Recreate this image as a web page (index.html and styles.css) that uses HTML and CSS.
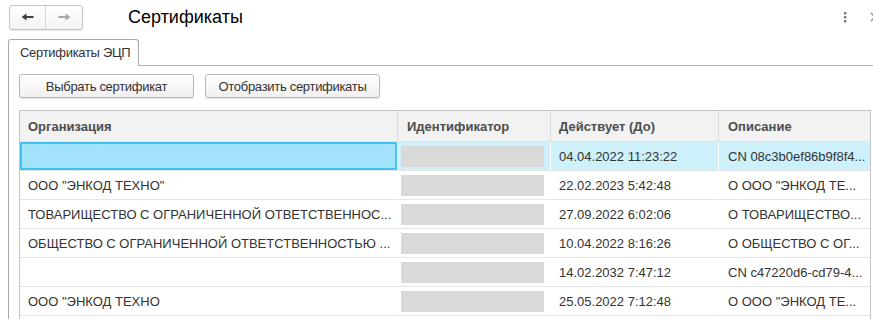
FILE: index.html
```html
<!DOCTYPE html>
<html lang="ru">
  <head>
    <meta charset="UTF-8" />
    <title>Сертификаты</title>
    <link rel="stylesheet" href="styles.css">
  </head>
  <body>
    <div class="toolbar">
      <div class="nav">
        <button class="nav-btn back">
          <svg width="13" height="8" viewBox="0 0 13 8"><path d="M0.5 4 L5.5 0.5 V3 H12.5 V5 H5.5 V7.5 Z" /></svg>
        </button>
        <button class="nav-btn fwd">
          <svg width="13" height="8" viewBox="0 0 13 8"><path d="M12.5 4 L7.5 0.5 V3 H0.5 V5 H7.5 V7.5 Z" /></svg>
        </button>
      </div>
      <h1 class="title">Сертификаты</h1>
      <div class="actions">
        <svg class="more" width="4" height="12" viewBox="0 0 4 12">
          <rect x="1" y="1" width="2.4" height="2.4" />
          <rect x="1" y="5" width="2.4" height="2.4" />
          <rect x="1" y="9" width="2.4" height="2.4" />
        </svg>
        <svg class="close" width="10" height="10" viewBox="0 0 10 10">
          <path d="M1 1 L9 9 M9 1 L1 9" />
        </svg>
      </div>
    </div>

    <div class="tabs">
      <div class="tab">Сертификаты ЭЦП</div>
      <div class="tab-line"></div>
    </div>

    <div class="panel">
      <div class="buttons">
        <button class="btn">Выбрать сертификат</button>
        <button class="btn">Отобразить сертификаты</button>
      </div>

      <table class="grid">
        <thead>
          <tr>
            <th class="c-org">Организация</th>
            <th class="c-id">Идентификатор</th>
            <th class="c-date">Действует (До)</th>
            <th class="c-desc">Описание</th>
          </tr>
        </thead>
        <tbody>
          <tr class="selected">
            <td class="current"></td>
            <td class="id"><div class="hidden-id"></div></td>
            <td>04.04.2022 11:23:22</td>
            <td>CN 08c3b0ef86b9f8f4...</td>
          </tr>
          <tr>
            <td>ООО "ЭНКОД ТЕХНО"</td>
            <td class="id"><div class="hidden-id"></div></td>
            <td>22.02.2023 5:42:48</td>
            <td>О ООО "ЭНКОД ТЕ...</td>
          </tr>
          <tr>
            <td>ТОВАРИЩЕСТВО С ОГРАНИЧЕННОЙ ОТВЕТСТВЕННОС...</td>
            <td class="id"><div class="hidden-id"></div></td>
            <td>27.09.2022 6:02:06</td>
            <td>О ТОВАРИЩЕСТВО...</td>
          </tr>
          <tr>
            <td>ОБЩЕСТВО С ОГРАНИЧЕННОЙ ОТВЕТСТВЕННОСТЬЮ ...</td>
            <td class="id"><div class="hidden-id"></div></td>
            <td>10.04.2022 8:16:26</td>
            <td>О ОБЩЕСТВО С ОГ...</td>
          </tr>
          <tr>
            <td></td>
            <td class="id"><div class="hidden-id"></div></td>
            <td>14.02.2032 7:47:12</td>
            <td>CN c47220d6-cd79-4...</td>
          </tr>
          <tr>
            <td>ООО "ЭНКОД ТЕХНО</td>
            <td class="id"><div class="hidden-id"></div></td>
            <td>25.05.2022 7:12:48</td>
            <td>О ООО "ЭНКОД ТЕ...</td>
          </tr>
          <tr>
            <td></td>
            <td class="id"><div class="hidden-id"></div></td>
            <td></td>
            <td></td>
          </tr>
        </tbody>
      </table>
    </div>
  </body>
</html>
```

FILE: styles.css
```css
html,
body {
  margin: 0;
  padding: 0;
  height: 320px;
  overflow: hidden;
  background: white;
}
body {
  font-family: "Liberation Sans", Arial, sans-serif;
  font-size: 13px;
  color: #333;
}
.toolbar {
  display: flex;
  align-items: center;
  height: 24px;
  padding: 5px 0 0 9px;
}
.nav {
  display: flex;
  height: 23px;
  border: 1px solid #c2c2c2;
  border-radius: 3px;
  background: linear-gradient(#fff, #f3f3f3);
  box-shadow: 0 1px 1px rgba(0, 0, 0, 0.08);
}
.nav-btn {
  width: 36px;
  height: 23px;
  padding: 0;
  border: none;
  background: none;
  display: flex;
  align-items: center;
  justify-content: center;
}
.nav-btn.back {
  border-right: 1px solid #d6d6d6;
}
.back svg {
  fill: #404040;
}
.fwd svg {
  fill: #a8a8a8;
}
.title {
  margin: 0 0 0 45px;
  font-size: 18px;
  font-weight: normal;
  color: #000;
}
.actions {
  margin-left: auto;
  display: flex;
  align-items: center;
  gap: 23px;
  margin-right: -7px;
}
.more {
  fill: #7a7a7a;
}
.close {
  flex-shrink: 0;
  stroke: #888;
  stroke-width: 1.4;
}
.tabs {
  display: flex;
  align-items: flex-end;
  margin-top: 10px;
  padding-left: 8px;
}
.tab {
  height: 26px;
  line-height: 26px;
  padding: 0 8px 0 11px;
  border: 1px solid #aaa;
  border-bottom: none;
  border-radius: 3px 3px 0 0;
  background: white;
  white-space: nowrap;
  letter-spacing: -0.3px;
}
.tab-line {
  flex: 1;
  border-bottom: 1px solid #b0b0b0;
}
.panel {
  margin-left: 8px;
  border-left: 1px solid #aaa;
  padding: 8px 0 0 10px;
  height: 245px;
  overflow: hidden;
}
.buttons {
  display: flex;
  gap: 11px;
}
.btn {
  width: 175px;
  height: 24px;
  padding: 0;
  font-family: inherit;
  font-size: 13px;
  letter-spacing: -0.3px;
  color: #333;
  border: 1px solid #b8b8b8;
  border-radius: 3px;
  background: linear-gradient(#fff, #f0f0f0);
  box-shadow: 0 1px 1px rgba(0, 0, 0, 0.12);
}
.grid {
  margin-top: 12px;
  width: 852px;
  table-layout: fixed;
  border-collapse: separate;
  border-spacing: 0;
  border: 1px solid #c4c4c4;
}
th,
td {
  box-sizing: border-box;
  padding: 0 8px;
  text-align: left;
  white-space: nowrap;
  overflow: hidden;
}
.c-org {
  width: 378px;
}
.c-id {
  width: 153px;
}
.c-date {
  width: 168px;
}
.c-desc {
  width: 151px;
}
th {
  height: 31px;
  background: #f2f2f2;
  color: #4d4d4d;
  font-weight: bold;
  border-right: 1px solid #dcdcdc;
  border-bottom: 1px solid #e4e4e4;
}
th:last-child {
  border-right: none;
}
th:nth-child(2),
th:nth-child(4) {
  padding-left: 9px;
}
td {
  height: 29px;
  border-bottom: 1px solid #e4e4e4;
  border-right: 1px solid #fff;
}
td:last-child {
  padding-left: 9px;
  border-right: none;
}
td.id {
  padding: 0 6px 0 3px;
}
.hidden-id {
  height: 21px;
  background: #d9d9d9;
}
.selected td {
  background: #cdf0fb;
}
.selected td.current {
  background: #a2e3f9;
  box-shadow: inset 0 0 0 2px #40c4ee;
}
```
